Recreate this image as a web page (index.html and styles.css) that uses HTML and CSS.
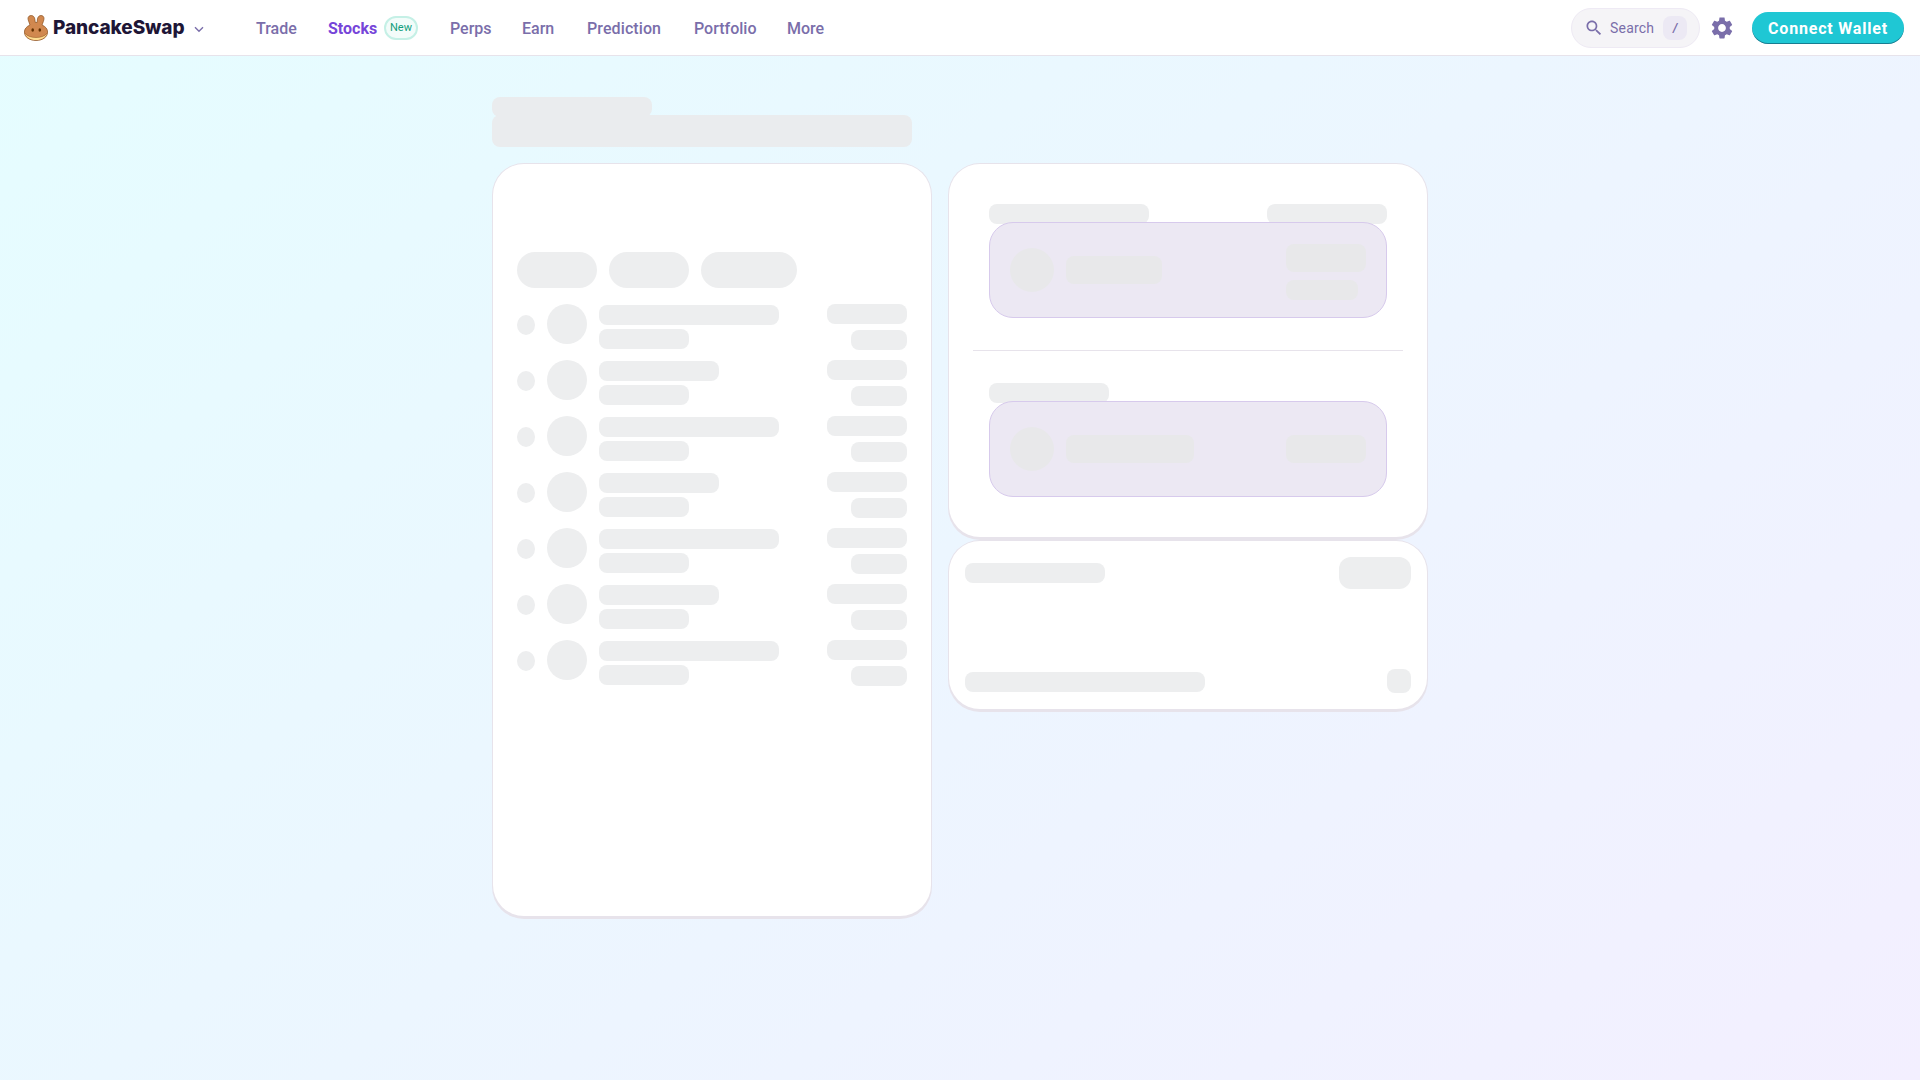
FILE: index.html
```html
<!DOCTYPE html>
<html lang="en">
<head>
<meta charset="utf-8">
<title>PancakeSwap</title>
<link rel="stylesheet" href="styles.css">
</head>
<body>
<header class="topbar">
  <div class="brand">
    <svg class="bunny" viewBox="0 0 24 26" aria-hidden="true">
      <path d="M6 10C5 7 4 5 4 3.500 4 1.500 5.500.5 7.200.5c2 0 3.300 1.500 3.600 3.500l.5 3.500c.6-.1 1.200-.1 1.700 0l.5-3.500C13.800 2 15 .5 17 .5c1.800 0 3 1.200 3 3 0 1.500-1 4-2 6.500 3.500 1.500 5.600 4 5.600 7 0 5-5.100 8.500-11.600 8.500S.4 22 .4 17c0-3 2.100-5.500 5.600-7z" fill="#D1884F" stroke="#8A4F1C" stroke-width=".7"/>
      <path d="M1 18.500c1.200 3.800 5.600 6.500 11 6.500s9.800-2.700 11-6.500c-2 2.600-6 4-11 4s-9-1.400-11-4z" fill="#FEDC90"/>
      <path d="M1 18.200c2 2.900 6 4.300 11 4.300s9-1.400 11-4.300" fill="none" stroke="#8A4F1C" stroke-width=".5"/>
      <ellipse cx="8.700" cy="15" rx="1.300" ry="1.800" fill="#633001"/>
      <ellipse cx="15.800" cy="15" rx="1.300" ry="1.800" fill="#633001"/>
    </svg>
    <span class="wordmark">PancakeSwap</span>
    <svg class="chevron" viewBox="0 0 10 7" aria-hidden="true"><path d="M1 1.200l4 4 4-4" fill="none" stroke="#7A6EAA" stroke-width="1.400"/></svg>
  </div>
  <nav class="nav">
    <a class="nav-link link-trade">Trade</a>
    <div class="nav-stocks"><a class="nav-link nav-active">Stocks</a><span class="badge">New</span></div>
    <a class="nav-link link-perps">Perps</a>
    <a class="nav-link link-earn">Earn</a>
    <a class="nav-link link-prediction">Prediction</a>
    <a class="nav-link link-portfolio">Portfolio</a>
    <a class="nav-link link-more">More</a>
  </nav>
  <div class="actions">
    <div class="search">
      <svg class="search-icon" viewBox="0 0 24 24" aria-hidden="true"><path d="M15.500 14h-.79l-.28-.27C15.410 12.590 16 11.110 16 9.500 16 5.910 13.090 3 9.500 3S3 5.910 3 9.500 5.910 16 9.500 16c1.610 0 3.090-.59 4.230-1.570l.27.28v.79l5 4.990L20.490 19l-4.990-5zm-6 0C7.010 14 5 11.990 5 9.500S7.010 5 9.500 5 14 7.010 14 9.500 11.990 14 9.500 14z"/></svg>
      <span class="search-label">Search</span>
      <span class="kbd">/</span>
    </div>
    <svg class="gear" viewBox="0 0 24 24" aria-hidden="true"><path d="M19.140 12.940c.04-.3.06-.61.06-.94 0-.32-.02-.64-.07-.94l2.030-1.580c.18-.14.23-.41.12-.61l-1.920-3.320c-.12-.22-.37-.29-.59-.22l-2.390.96c-.5-.38-1.030-.7-1.620-.94l-.36-2.540c-.04-.24-.24-.41-.48-.41h-3.840c-.24 0-.43.17-.47.41l-.36 2.540c-.59.24-1.130.57-1.620.94l-2.390-.96c-.22-.08-.47 0-.59.22L2.740 8.870c-.12.21-.08.47.12.61l2.030 1.580c-.05.3-.09.63-.09.94s.02.64.07.94l-2.030 1.580c-.18.14-.23.41-.12.61l1.920 3.320c.12.22.37.29.59.22l2.390-.96c.5.38 1.030.7 1.620.94l.36 2.540c.05.24.24.41.48.41h3.840c.24 0 .44-.17.47-.41l.36-2.540c.59-.24 1.130-.56 1.620-.94l2.390.96c.22.08.47 0 .59-.22l1.920-3.320c.12-.22.07-.47-.12-.61l-2.010-1.580zM12 15.600c-1.980 0-3.600-1.620-3.600-3.600s1.620-3.600 3.600-3.600 3.600 1.620 3.600 3.600-1.620 3.600-3.600 3.600z"/></svg>
    <button class="connect">Connect Wallet</button>
  </div>
</header>

<main class="page">
  <div class="title-block">
    <div class="sk sk-eyebrow"></div>
    <div class="sk sk-title"></div>
  </div>
  <div class="columns">
    <section class="card card-list">
      <div class="card-inner list-inner">
        <div class="pills">
          <div class="sk pill pill-80"></div>
          <div class="sk pill pill-80"></div>
          <div class="sk pill pill-96"></div>
        </div>
        <div class="rows">
          <div class="row"><div class="sk dot"></div><div class="sk avatar"></div><div class="row-text"><div class="sk bar w180"></div><div class="sk bar w90"></div></div><div class="row-num"><div class="sk bar w80"></div><div class="sk bar w56"></div></div></div>
          <div class="row"><div class="sk dot"></div><div class="sk avatar"></div><div class="row-text"><div class="sk bar w120"></div><div class="sk bar w90"></div></div><div class="row-num"><div class="sk bar w80"></div><div class="sk bar w56"></div></div></div>
          <div class="row"><div class="sk dot"></div><div class="sk avatar"></div><div class="row-text"><div class="sk bar w180"></div><div class="sk bar w90"></div></div><div class="row-num"><div class="sk bar w80"></div><div class="sk bar w56"></div></div></div>
          <div class="row"><div class="sk dot"></div><div class="sk avatar"></div><div class="row-text"><div class="sk bar w120"></div><div class="sk bar w90"></div></div><div class="row-num"><div class="sk bar w80"></div><div class="sk bar w56"></div></div></div>
          <div class="row"><div class="sk dot"></div><div class="sk avatar"></div><div class="row-text"><div class="sk bar w180"></div><div class="sk bar w90"></div></div><div class="row-num"><div class="sk bar w80"></div><div class="sk bar w56"></div></div></div>
          <div class="row"><div class="sk dot"></div><div class="sk avatar"></div><div class="row-text"><div class="sk bar w120"></div><div class="sk bar w90"></div></div><div class="row-num"><div class="sk bar w80"></div><div class="sk bar w56"></div></div></div>
          <div class="row"><div class="sk dot"></div><div class="sk avatar"></div><div class="row-text"><div class="sk bar w180"></div><div class="sk bar w90"></div></div><div class="row-num"><div class="sk bar w80"></div><div class="sk bar w56"></div></div></div>
        </div>
      </div>
    </section>
    <div class="side">
      <section class="card">
        <div class="card-inner swap-inner">
          <div class="swap-section">
            <div class="label-row"><div class="sk bar w160"></div><div class="sk bar w120"></div></div>
            <div class="token-box">
              <div class="sk token-icon"></div>
              <div class="sk token-name w96"></div>
              <div class="token-right">
                <div class="sk token-name w80"></div>
                <div class="sk bar w72"></div>
              </div>
            </div>
          </div>
          <div class="divider"></div>
          <div class="swap-section">
            <div class="label-row"><div class="sk bar w120"></div></div>
            <div class="token-box">
              <div class="sk token-icon"></div>
              <div class="sk token-name w128"></div>
              <div class="sk token-name w80 push"></div>
            </div>
          </div>
        </div>
      </section>
      <section class="card">
        <div class="card-inner quote-inner">
          <div class="quote-top"><div class="sk bar w140"></div><div class="sk quote-btn"></div></div>
          <div class="quote-bottom"><div class="sk bar w240 nudge"></div><div class="sk quote-square"></div></div>
        </div>
      </section>
    </div>
  </div>
</main>
</body>
</html>
```

FILE: styles.css
```css
* { box-sizing: border-box; }
html, body { margin: 0; padding: 0; }
body {
  width: 1920px;
  height: 1080px;
  overflow: hidden;
  background: linear-gradient(139.73deg, #E5FDFF 0%, #F3EFFF 100%);
  font-family: Roboto, "Noto Sans", sans-serif;
}

/* Header */
.topbar {
  height: 56px;
  display: flex;
  align-items: center;
  padding: 1px 16px 0 24px;
  background: #fff;
  border-bottom: 1px solid #E7E3EB;
}
.brand { display: flex; align-items: center; width: 232px; }
.bunny { width: 24px; height: 26px; display: block; }
.wordmark {
  margin-left: 5px;
  font-family: Inter, sans-serif;
  font-weight: 800;
  font-size: 19px;
  letter-spacing: -0.08px;
  line-height: 24px;
  color: #1E1636;
}
.chevron { width: 10px; height: 7px; margin-left: 9px; margin-top: 2px; display: block; }

.nav { display: flex; align-items: center; gap: 32px; }
.nav-link {
  display: block;
  padding-top: 2px;
  font-size: 16px;
  line-height: 24px;
  font-weight: 500;
  color: #7A6EAA;
  white-space: nowrap;
}
.link-trade { width: 40px; }
.link-perps { width: 40px; }
.link-earn { width: 33px; }
.link-prediction { width: 75px; letter-spacing: 0.1px; }
.link-portfolio { width: 61px; }
.link-more { width: 36px; }
.nav-stocks { display: flex; align-items: center; gap: 7px; }
.nav-active { width: 49px; color: #7645D9; font-weight: 700; }
.badge {
  width: 34px;
  height: 24px;
  border-radius: 12px;
  border: 2px solid #C5F0E6;
  background: #F3FCFA;
  color: #129E7D;
  font-size: 11px;
  line-height: 20px;
  text-align: center;
}

.actions { margin-left: auto; display: flex; align-items: center; }
.search {
  width: 129px;
  height: 40px;
  display: flex;
  align-items: center;
  padding-left: 12px;
  border-radius: 20px;
  background: #F5F4F7;
  border: 1px solid #EEEAF4;
}
.search-icon { width: 20px; height: 20px; fill: #7A6EAA; display: block; }
.search-label {
  margin-left: 6px;
  font-size: 14px;
  color: #7A6EAA;
  letter-spacing: 0.2px;
}
.kbd {
  margin-left: 9px;
  width: 24px;
  height: 24px;
  border-radius: 8px;
  background: #ECE9F4;
  color: #7A6EAA;
  font-size: 12px;
  font-weight: 700;
  font-style: italic;
  line-height: 24px;
  text-align: center;
}
.gear { width: 26px; height: 26px; margin-left: 9px; fill: #7A6EAA; display: block; }
.connect {
  width: 152px;
  height: 32px;
  margin-left: 17px;
  padding: 1px 0 0;
  border: 0;
  border-radius: 16px;
  background: #1FC7D4;
  box-shadow: inset 0 -1px 0 0 rgba(14, 14, 44, 0.4);
  color: #fff;
  font-family: inherit;
  font-size: 16px;
  font-weight: 700;
  letter-spacing: 0.8px;
}

/* Page */
.page { width: 936px; margin: 0 auto; padding-top: 41px; }
.title-block { margin-bottom: 16px; }
.sk { background: #EDEEEF; border-radius: 8px; }
.sk-eyebrow { width: 160px; height: 20px; margin-bottom: -2px; background: #EAECEE; }
.sk-title { width: 420px; height: 32px; position: relative; background: #EAECEE; }

.columns { display: grid; grid-template-columns: 440px 480px; gap: 16px; align-items: start; }
.card {
  padding: 1px 1px 3px;
  border-radius: 32px;
  background: #E7E3EB;
}
.card-inner { background: #fff; border-radius: 31px; }
.card-list { height: 756px; }
.list-inner { height: 100%; padding: 88px 24px 0; }

.pills { display: flex; gap: 12px; margin-bottom: 16px; }
.pill { height: 36px; border-radius: 18px; }
.pill-80 { width: 80px; }
.pill-96 { width: 96px; }

.rows { display: flex; flex-direction: column; gap: 8px; }
.row { display: flex; height: 48px; align-items: flex-start; }
.dot { width: 18px; height: 20px; margin-top: 11px; border-radius: 50%; }
.avatar { width: 40px; height: 40px; margin-left: 12px; border-radius: 50%; }
.row-text { margin-left: 12px; padding-top: 1px; display: flex; flex-direction: column; gap: 4px; }
.row-num { margin-left: auto; display: flex; flex-direction: column; align-items: flex-end; gap: 6px; }
.bar { height: 20px; }
.w56 { width: 56px; }
.w72 { width: 72px; }
.w80 { width: 80px; }
.w90 { width: 90px; }
.w96 { width: 96px; }
.w120 { width: 120px; }
.w128 { width: 128px; }
.w140 { width: 140px; }
.w160 { width: 160px; }
.w180 { width: 180px; }
.w240 { width: 240px; }

.side { display: flex; flex-direction: column; }
.swap-inner { padding: 40px 24px; }
.swap-section { padding: 0 16px; }
.label-row { display: flex; justify-content: space-between; margin-bottom: -2px; }
.token-box {
  position: relative;
  height: 96px;
  padding: 0 20px;
  display: flex;
  align-items: center;
  border-radius: 24px;
  background: #ECE8F3;
  border: 1px solid #D7CAEC;
}
.token-icon { width: 44px; height: 44px; border-radius: 50%; background: #E8E8EA; }
.token-name { height: 28px; margin-left: 12px; background: #E8E8EA; }
.token-right { margin-left: auto; margin-top: 3px; display: flex; flex-direction: column; gap: 8px; }
.token-right .token-name { margin-left: 0; }
.token-right .bar { background: #E8E8EA; }
.push { margin-left: auto; }
.divider { height: 1px; margin: 32px 0; background: #E7E3EB; }

.quote-inner { padding: 16px; }
.quote-top { display: flex; justify-content: space-between; align-items: center; margin-bottom: 80px; }
.quote-btn { width: 72px; height: 32px; border-radius: 12px; }
.quote-bottom { display: flex; justify-content: space-between; align-items: flex-start; }
.nudge { margin-top: 3px; }
.quote-square { width: 24px; height: 24px; }
```
